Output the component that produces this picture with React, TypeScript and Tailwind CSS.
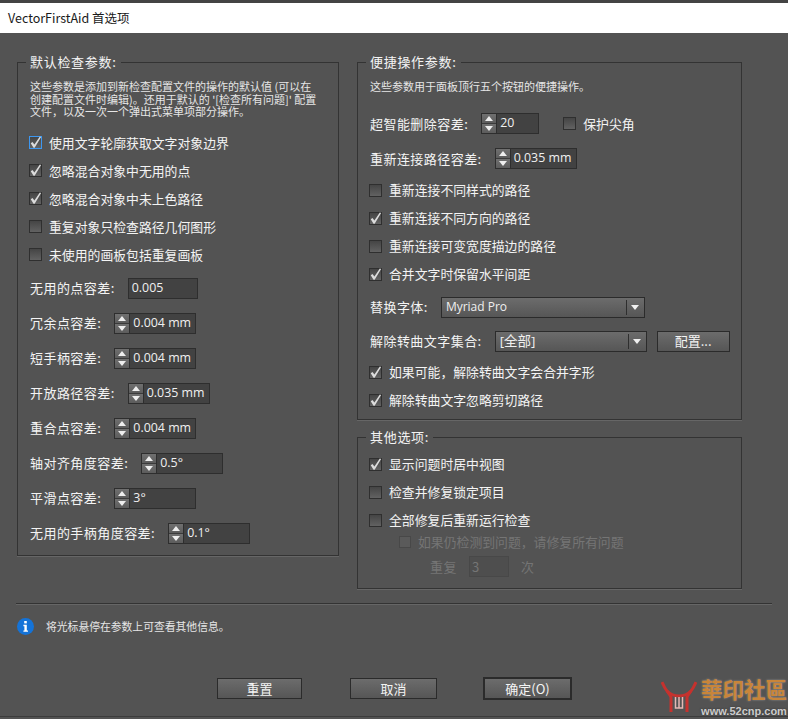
import type { ReactNode } from "react";

const cjk = "font-['Noto_Sans_CJK_SC','Noto_Sans',sans-serif]";
const latin = "font-['Open_Sans','Noto_Sans_CJK_SC',sans-serif]";

function Check() {
  return (
    <svg viewBox="0 0 12 12" className="h-[13px] w-[13px] overflow-visible">
      <path d="M1.6 6.6 L3.2 5.6 L5 7.8 L10 0.4 L11.2 1 L5.2 10.8 L4.2 10.8 Z" fill="#dcdcdc" />
    </svg>
  );
}

function CheckRow({ label, checked, focused }: { label: string; checked?: boolean; focused?: boolean }) {
  return (
    <div className="flex h-[28px] items-center">
      <span
        className={
          "-ml-px flex h-[13px] w-[13px] shrink-0 items-center justify-center border bg-gradient-to-b from-[#454545] to-[#626262] " +
          (focused ? "border-[#3d97f0]" : "border-[#2f2f2f]")
        }
      >
        {checked && <Check />}
      </span>
      <span className="ml-[7px] text-[12.85px] whitespace-nowrap text-[#f4f4f4]">{label}</span>
    </div>
  );
}

function Spinner({ value, width = "w-[82px]" }: { value: string; width?: string }) {
  return (
    <div className={"flex h-[21px] shrink-0 border border-[#2e2e2e] bg-[#424242] " + width}>
      <div className="flex w-[15px] shrink-0 flex-col border-r border-[#2e2e2e]">
        <div className="flex flex-1 items-center justify-center border-b border-[#3a3a3a] bg-gradient-to-b from-[#707070] to-[#5c5c5c]">
          <span className="h-0 w-0 border-x-[4px] border-b-[5px] border-x-transparent border-b-[#eeeeee]" />
        </div>
        <div className="flex flex-1 items-center justify-center bg-gradient-to-b from-[#707070] to-[#5c5c5c]">
          <span className="h-0 w-0 border-x-[4px] border-t-[5px] border-x-transparent border-t-[#eeeeee]" />
        </div>
      </div>
      <span className={"pl-[3px] text-[12.4px] leading-[18px] whitespace-nowrap text-[#f0f0f0] " + latin}>{value}</span>
    </div>
  );
}

function FieldRow({ label, children, className = "h-[35px]" }: { label: string; children: ReactNode; className?: string }) {
  return (
    <div className={"flex items-center " + className}>
      <span className="mr-[13px] text-[13px] tracking-[0.45px] whitespace-nowrap text-[#f4f4f4]">{label}</span>
      {children}
    </div>
  );
}

function Select({ value, width, className = "text-[12px]" }: { value: string; width: string; className?: string }) {
  return (
    <div className={"flex h-[21px] items-center border border-[#2b2b2b] bg-gradient-to-b from-[#6c6c6c] to-[#565656] " + width}>
      <span className={"flex-1 pl-[4px] text-[#efefef] " + latin + " " + className}>{value}</span>
      <span className="h-[15px] w-px bg-[#2e2e2e]" />
      <span className="flex w-[17px] justify-center">
        <span className="h-0 w-0 border-x-[4px] border-t-[5px] border-x-transparent border-t-[#f0f0f0]" />
      </span>
    </div>
  );
}

function Group({ title, className, children }: { title: string; className: string; children: ReactNode }) {
  return (
    <fieldset className={"border border-[#333333] pl-[12px] shadow-[0_1px_0_#666666] " + className}>
      <legend className="-ml-[4px] h-[18px] px-[4px] text-[13px] leading-[18px] tracking-[0.7px] text-[#f4f4f4]">{title}</legend>
      {children}
    </fieldset>
  );
}

function DialogButton({ label, className = "" }: { label: string; className?: string }) {
  return (
    <button className={"flex h-[21px] items-center justify-center border border-[#2b2b2b] bg-gradient-to-b from-[#6c6c6c] to-[#565656] text-[13px] text-[#f4f4f4] " + className}>
      {label}
    </button>
  );
}

export default function App() {
  return (
    <div className={"relative flex h-[719px] w-[788px] flex-col overflow-hidden bg-[#535353] " + cjk}>
      <div className="h-[3px] bg-[#444444]" />
      <div className="flex h-[30px] items-center bg-white pl-[8px] text-[12.5px] text-[#1a1a1a]">VectorFirstAid 首选项</div>

      <div className="mt-[20px] flex items-start pl-[17px]">
        <Group title="默认检查参数:" className="h-[503px] w-[322px]">
          <p className="mt-[9px] w-[290px] text-[11px] leading-[12.5px] text-[#e6e6e6]">
            这些参数是添加到新检查配置文件的操作的默认值 (可以在创建配置文件时编辑)。还用于默认的 '[检查所有问题]' 配置文件，以及一次一个弹出式菜单项部分操作。
          </p>
          <div className="mt-[11px] flex flex-col">
            <CheckRow label="使用文字轮廓获取文字对象边界" checked focused />
            <CheckRow label="忽略混合对象中无用的点" checked />
            <CheckRow label="忽略混合对象中未上色路径" checked />
            <CheckRow label="重复对象只检查路径几何图形" />
            <CheckRow label="未使用的画板包括重复画板" />
          </div>
          <div className="mt-[2px]">
            <FieldRow label="无用的点容差:">
              <div className={"h-[21px] w-[70px] border border-[#2e2e2e] bg-[#424242] pl-[3px] text-[12.4px] leading-[18px] text-[#f0f0f0] " + latin}>0.005</div>
            </FieldRow>
            <FieldRow label="冗余点容差:"><Spinner value="0.004 mm" /></FieldRow>
            <FieldRow label="短手柄容差:"><Spinner value="0.004 mm" /></FieldRow>
            <FieldRow label="开放路径容差:"><Spinner value="0.035 mm" /></FieldRow>
            <FieldRow label="重合点容差:"><Spinner value="0.004 mm" /></FieldRow>
            <FieldRow label="轴对齐角度容差:"><Spinner value="0.5°" /></FieldRow>
            <FieldRow label="平滑点容差:"><Spinner value="3°" /></FieldRow>
            <FieldRow label="无用的手柄角度容差:"><Spinner value="0.1°" /></FieldRow>
          </div>
        </Group>

        <div className="ml-[18px] flex w-[385px] flex-col">
          <Group title="便捷操作参数:" className="h-[367px]">
            <p className="mt-[9px] text-[11px] leading-[13px] text-[#e6e6e6]">这些参数用于面板顶行五个按钮的便捷操作。</p>
            <div className="mt-[13px]">
              <FieldRow label="超智能删除容差:">
                <Spinner value="20" width="w-[58px]" />
                <span className="ml-[25px]"><CheckRow label="保护尖角" /></span>
              </FieldRow>
              <FieldRow label="重新连接路径容差:"><Spinner value="0.035 mm" /></FieldRow>
            </div>
            <CheckRow label="重新连接不同样式的路径" />
            <CheckRow label="重新连接不同方向的路径" checked />
            <CheckRow label="重新连接可变宽度描边的路径" />
            <CheckRow label="合并文字时保留水平间距" checked />
            <div className="mt-[2px]">
              <FieldRow label="替换字体:" className="h-[34px]"><Select value="Myriad Pro" width="w-[204px]" /></FieldRow>
              <FieldRow label="解除转曲文字集合:" className="h-[34px]">
                <Select value="[全部]" width="w-[152px]" className="text-[13.5px]" />
                <DialogButton label="配置..." className="ml-[10px] w-[73px]" />
              </FieldRow>
            </div>
            <CheckRow label="如果可能，解除转曲文字会合并字形" checked />
            <CheckRow label="解除转曲文字忽略剪切路径" checked />
          </Group>

          <Group title="其他选项:" className="mt-[8px] h-[161px]">
            <div className="mt-[4px]">
              <CheckRow label="显示问题时居中视图" checked />
              <CheckRow label="检查并修复锁定项目" />
              <CheckRow label="全部修复后重新运行检查" />
            </div>
            <div className="ml-[29px] flex h-[16px] items-center text-[12.85px] text-[#757575]">
              <span className="h-[12px] w-[12px] border border-[#484848] bg-[#5a5a5a]" />
              <span className="ml-[7px]">如果仍检测到问题，请修复所有问题</span>
            </div>
            <div className="ml-[60px] mt-[6px] flex h-[21px] items-center text-[13px] text-[#757575]">
              <span className="tracking-[0.5px]">重复</span>
              <span className="ml-[12px] h-[21px] w-[40px] border border-[#484848] bg-[#4e4e4e] pl-[2px] leading-[19px]">3</span>
              <span className="ml-[12px]">次</span>
            </div>
          </Group>
        </div>
      </div>

      <div className="mx-[16px] mt-[14px] h-[2px] border-t border-b border-t-[#333333] border-b-[#666666]" />

      <div className="mt-[13px] flex items-center pl-[17px]">
        <svg viewBox="0 0 17 17" className="h-[17px] w-[17px]">
          <circle cx="8.5" cy="8.5" r="8.5" fill="#1473d8" />
          <rect x="7.2" y="3" width="2.6" height="2.4" fill="#ffffff" />
          <path d="M6.4 6.8 H9.8 V12.4 H11 V13.8 H6.4 V12.4 H7.4 V8.2 H6.4 Z" fill="#ffffff" />
        </svg>
        <span className="ml-[12px] text-[10.8px] text-[#e6e6e6]">将光标悬停在参数上可查看其他信息。</span>
      </div>

      <div className="mt-[42px] flex items-center pl-[217px]">
        <DialogButton label="重置" className="w-[85px]" />
        <DialogButton label="取消" className="ml-[48px] w-[87px]" />
        <DialogButton label="确定(O)" className="ml-[46px] h-[23px] w-[89px] border-2" />
      </div>

      <div className="absolute inset-x-0 bottom-[2px] h-px bg-[#3c3c3c]" />

      {/* site watermark */}
      <div className="absolute right-0 bottom-[2px] flex items-start">
        <svg viewBox="0 0 36 33" className="h-[33px] w-[36px]">
          <g fill="none" stroke="#c5322e" strokeWidth="3">
            <path d="M1 2 C4 10 8 13 10 17 L10 32" />
            <path d="M35 2 C32 10 28 13 26 17 L26 32" />
            <path d="M6 11 C10 15 14 16 18 16 C22 16 26 15 30 11" />
          </g>
          <path d="M14.5 17 V28 H21.5 V17 M18 17 V28" fill="none" stroke="#e4b8b4" strokeWidth="1.5" />
        </svg>
        <div className="ml-[3px] flex w-[88px] flex-col items-center">
          <span className="mt-[1px] whitespace-nowrap text-[21.5px] leading-[21px] font-bold text-[#c8853a] [text-shadow:0_0_2px_#9a9a9a] font-['Liberation_Sans','Noto_Sans_CJK_TC',sans-serif]">華印社區</span>
          <span className="mt-[3px] text-[11px] leading-[12px] font-bold text-[#cccccc] [text-shadow:0_0_2px_#333333] font-['Liberation_Sans',sans-serif]">www.52cnp.com</span>
        </div>
      </div>
    </div>
  );
}
